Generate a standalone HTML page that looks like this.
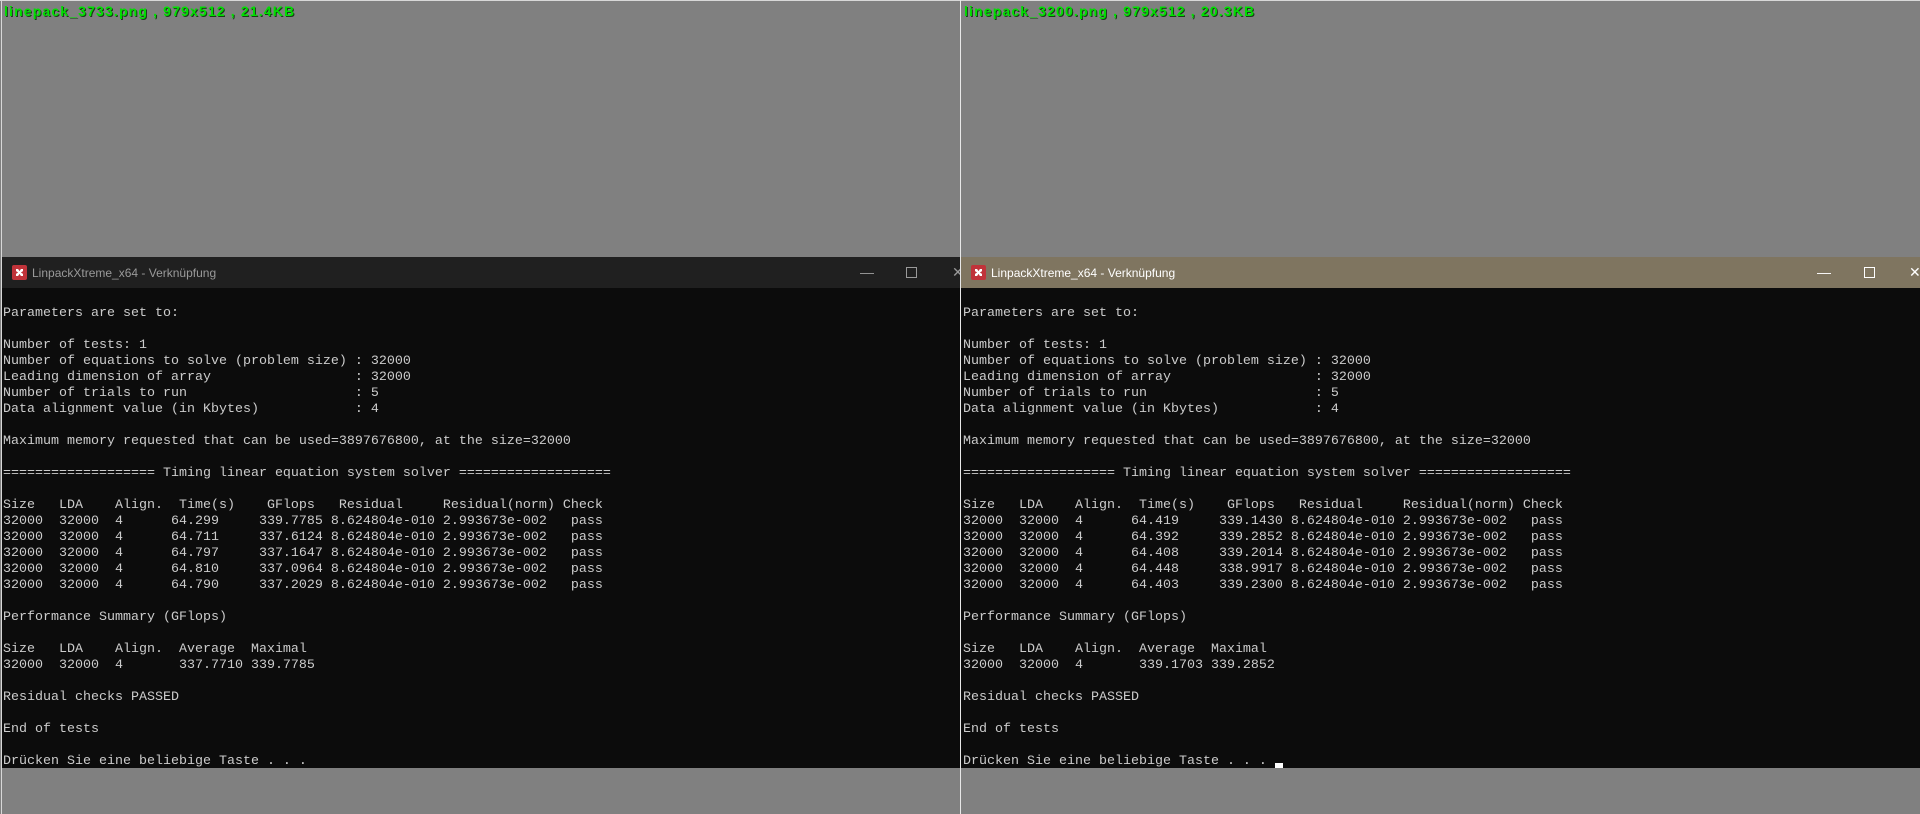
<!DOCTYPE html>
<html><head><meta charset="utf-8"><style>
html,body{margin:0;padding:0;background:#808080;width:1920px;height:814px;overflow:hidden;position:relative}
.lbl{position:absolute;top:3px;font:bold 14px "Liberation Sans",sans-serif;color:#00e000;text-shadow:1px 1px 0 #1a3a1a;letter-spacing:1.15px;white-space:pre}
.tb{position:absolute;top:257px;height:31px;font:12px "Liberation Sans",sans-serif}
.tb .t{position:absolute;left:30px;top:9px;white-space:pre}
.ico{position:absolute;left:10px;top:8px;width:15px;height:15px;background:#c0333a;border-radius:2px}
.ico:after{content:"";position:absolute;left:4px;top:4px;width:7px;height:7px;background:#fff;clip-path:polygon(0 0,30% 0,50% 30%,70% 0,100% 0,100% 30%,70% 50%,100% 70%,100% 100%,70% 100%,50% 70%,30% 100%,0 100%,0 70%,30% 50%,0 30%)}
.ctl{position:absolute;top:0;font:14px "Liberation Sans",sans-serif;line-height:31px}
.con{position:absolute;top:288px;height:480px;background:#0c0c0c}
pre{position:absolute;margin:0;top:306px;font:13.33px "Liberation Mono",monospace;line-height:16px;color:#cccccc}
</style></head><body>
<div style="position:absolute;left:0;top:0;width:1920px;height:1px;background:#d8d8d8"></div>
<div style="position:absolute;left:1px;top:0;width:1px;height:814px;background:#d8d8d8"></div>
<div style="position:absolute;left:960px;top:0;width:1px;height:814px;background:#e8e8e8"></div>
<div class="lbl" style="left:4px">linepack_3733.png , 979x512 , 21.4KB</div>
<div class="lbl" style="left:964px">linepack_3200.png , 979x512 , 20.3KB</div>

<div class="tb" style="left:2px;width:958px;background:#202020;color:#9a9a9a;overflow:hidden">
<div class="ico"></div><div class="t">LinpackXtreme_x64 - Verknüpfung</div>
<div class="ctl" style="left:858px">—</div>
<div style="position:absolute;left:904px;top:10px;width:9px;height:9px;border:1px solid #9a9a9a"></div>
<div class="ctl" style="left:950px">✕</div>
</div>
<div class="tb" style="left:961px;width:959px;background:#7f7560;color:#fff;overflow:hidden">
<div class="ico"></div><div class="t">LinpackXtreme_x64 - Verknüpfung</div>
<div class="ctl" style="left:856px">—</div>
<div style="position:absolute;left:903px;top:10px;width:9px;height:9px;border:1px solid #fff"></div>
<div class="ctl" style="left:948px;font-weight:normal">✕</div>
</div>

<div class="con" style="left:2px;width:958px"></div>
<div class="con" style="left:961px;width:959px"></div>

<pre style="left:3px">Parameters are set to:

Number of tests: 1
Number of equations to solve (problem size) : 32000
Leading dimension of array                  : 32000
Number of trials to run                     : 5
Data alignment value (in Kbytes)            : 4

Maximum memory requested that can be used=3897676800, at the size=32000

=================== Timing linear equation system solver ===================

Size   LDA    Align.  Time(s)    GFlops   Residual     Residual(norm) Check
32000  32000  4      64.299     339.7785 8.624804e-010 2.993673e-002   pass
32000  32000  4      64.711     337.6124 8.624804e-010 2.993673e-002   pass
32000  32000  4      64.797     337.1647 8.624804e-010 2.993673e-002   pass
32000  32000  4      64.810     337.0964 8.624804e-010 2.993673e-002   pass
32000  32000  4      64.790     337.2029 8.624804e-010 2.993673e-002   pass

Performance Summary (GFlops)

Size   LDA    Align.  Average  Maximal
32000  32000  4       337.7710 339.7785

Residual checks PASSED

End of tests

Drücken Sie eine beliebige Taste . . .</pre>

<pre style="left:963px">Parameters are set to:

Number of tests: 1
Number of equations to solve (problem size) : 32000
Leading dimension of array                  : 32000
Number of trials to run                     : 5
Data alignment value (in Kbytes)            : 4

Maximum memory requested that can be used=3897676800, at the size=32000

=================== Timing linear equation system solver ===================

Size   LDA    Align.  Time(s)    GFlops   Residual     Residual(norm) Check
32000  32000  4      64.419     339.1430 8.624804e-010 2.993673e-002   pass
32000  32000  4      64.392     339.2852 8.624804e-010 2.993673e-002   pass
32000  32000  4      64.408     339.2014 8.624804e-010 2.993673e-002   pass
32000  32000  4      64.448     338.9917 8.624804e-010 2.993673e-002   pass
32000  32000  4      64.403     339.2300 8.624804e-010 2.993673e-002   pass

Performance Summary (GFlops)

Size   LDA    Align.  Average  Maximal
32000  32000  4       339.1703 339.2852

Residual checks PASSED

End of tests

Drücken Sie eine beliebige Taste . . .</pre>
<div style="position:absolute;left:1275px;top:763px;width:8px;height:5px;background:#fff"></div>
</body></html>
